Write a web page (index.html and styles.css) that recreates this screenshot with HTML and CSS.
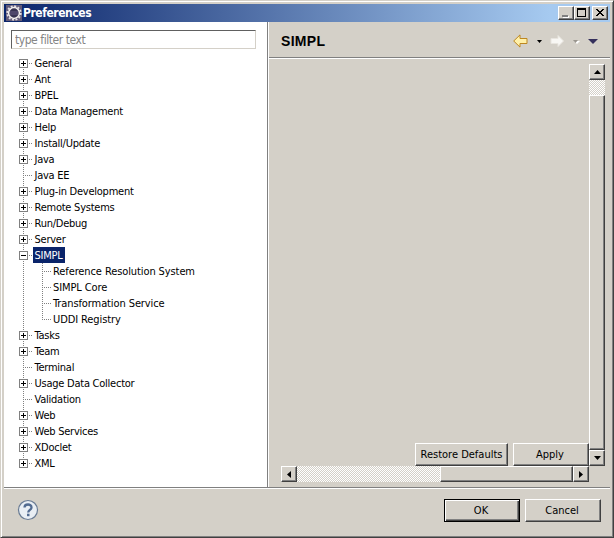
FILE: index.html
```html
<!DOCTYPE html>
<html lang="en">
<head>
<meta charset="utf-8">
<title>Preferences</title>
<link rel="stylesheet" href="styles.css">
</head>
<body>
<div class="window">
  <header class="titlebar">
    <svg class="app-icon" width="16" height="16" viewBox="0 0 16 16"><rect width="16" height="16" fill="#625a78"/><circle cx="8" cy="8" r="6.8" fill="none" stroke="#e4e0e4" stroke-width="1.8" stroke-dasharray="2 1.56"/><circle cx="8" cy="8" r="5.4" fill="#383352" stroke="#f4f0ee" stroke-width="1.5"/><path d="M4 7h8M4 9h8" stroke="#665d83"/></svg>
    <h1>Preferences</h1>
    <div class="caption-buttons">
      <button class="cap"><svg width="12" height="11"><path d="M3 8h6v2H3z" fill="#fff"/><path d="M2 7h6v2H2z" fill="#808080"/></svg></button>
      <button class="cap max"><svg width="12" height="11"><path d="M1 0h9v9H1zM2 2v6h7V2z" fill-rule="evenodd"/></svg></button>
      <button class="cap"><svg width="12" height="11" shape-rendering="crispEdges"><path d="M2 1h2v1h1v1h2V2h1V1h2v1H9v1H8v1H7v1h1v1h1v1h1v1H8V7H7V6H5v1H4v1H2V7h1V6h1V5h1V4H4V3H3V2H2z"/></svg></button>
    </div>
  </header>
  <main class="body">
    <aside class="sidebar">
      <input class="filter" placeholder="type filter text" aria-label="Filter">
      <ul class="tree">
        <li class="plus first"><span>General</span></li>
        <li class="plus"><span>Ant</span></li>
        <li class="plus"><span>BPEL</span></li>
        <li class="plus"><span>Data Management</span></li>
        <li class="plus"><span>Help</span></li>
        <li class="plus"><span>Install/Update</span></li>
        <li class="plus"><span>Java</span></li>
        <li class="leaf"><span>Java EE</span></li>
        <li class="plus"><span>Plug-in Development</span></li>
        <li class="plus"><span>Remote Systems</span></li>
        <li class="plus"><span>Run/Debug</span></li>
        <li class="plus"><span>Server</span></li>
        <li class="minus"><span class="selected">SIMPL</span></li>
        <li class="child"><span>Reference Resolution System</span></li>
        <li class="child"><span>SIMPL Core</span></li>
        <li class="child"><span>Transformation Service</span></li>
        <li class="child end"><span>UDDI Registry</span></li>
        <li class="plus"><span>Tasks</span></li>
        <li class="plus"><span>Team</span></li>
        <li class="leaf"><span>Terminal</span></li>
        <li class="plus"><span>Usage Data Collector</span></li>
        <li class="leaf"><span>Validation</span></li>
        <li class="plus"><span>Web</span></li>
        <li class="plus"><span>Web Services</span></li>
        <li class="plus"><span>XDoclet</span></li>
        <li class="plus last"><span>XML</span></li>
      </ul>
    </aside>
    <section class="page">
      <div class="page-head">
        <h2>SIMPL</h2>
        <svg class="nav" width="88" height="14" viewBox="0 0 88 14">
          <path d="M.7 7L7 .9v3.600h7v5H7v3.600z" fill="#fff0a8" stroke="#bd8720" stroke-linejoin="round"/>
          <path d="M24 6h5l-2.500 3z"/>
          <path d="M50.500 7l-5.500-5.500v3h-7v5h7v3z" fill="#f8f7f4" stroke="#e8e5df"/>
          <path d="M61 7h6l-3 3z" fill="#fff"/><path d="M60 6h5l-2.500 3z" fill="#99958e"/>
          <path d="M75 5h10l-5 5z" fill="#35305c"/>
        </svg>
      </div>
      <div class="scroller">
        <div class="view">
          <div class="page-actions"><button class="btn restore">Restore Defaults</button><button class="btn apply">Apply</button></div>
        </div>
        <div class="vbar">
          <button class="arrow"><svg width="7" height="4"><path d="M0 4h7L3.500 0z"/></svg></button>
          <div class="track"></div><div class="thumb"></div>
          <button class="arrow"><svg width="7" height="4"><path d="M0 0h7L3.500 4z"/></svg></button>
        </div>
        <div class="hbar">
          <button class="arrow"><svg width="4" height="7"><path d="M4 0v7L0 3.500z"/></svg></button>
          <div class="track"></div><div class="thumb"></div>
          <button class="arrow"><svg width="4" height="7"><path d="M0 0v7L4 3.500z"/></svg></button>
        </div>
      </div>
    </section>
  </main>
  <footer class="footer">
    <svg class="help" width="22" height="22" viewBox="0 0 22 22"><circle cx="11" cy="11" r="9.500" fill="#e9eef4" stroke="#697b94" stroke-width="1.200"/><path d="M7.500 8.600C7.500 4.500 14.500 4.500 14.500 8.400c0 2.400-3.300 2.500-3.300 5" fill="none" stroke="#526b91" stroke-width="2.300"/><rect x="10" y="14.700" width="2.500" height="2.500" fill="#526b91"/></svg>
    <button class="btn ok">OK</button><button class="btn cancel">Cancel</button>
  </footer>
</div>
</body>
</html>
```
FILE: styles.css
```css
*, ::before { box-sizing: border-box; }
body { margin: 0; font: 11px/16px "DejaVu Sans Condensed", "DejaVu Sans", sans-serif; color: #000; }
button { font: inherit; color: inherit; border-radius: 0; padding: 0; background: #d4d0c8; }
svg { display: block; }
.window {
  width: 614px; height: 538px; padding: 3px;
  background: #d4d0c8; border: 1px solid #404040; border-top-color: #d4d0c8; border-left-color: #d4d0c8;
  box-shadow: inset 1px 1px #fff, inset -1px -1px #808080;
  display: flex; flex-direction: column;
}
.titlebar { height: 18px; flex: none; display: flex; align-items: center; padding: 0 2px; background: linear-gradient(90deg, #0a246a, #a6caf0 90%); }
.titlebar h1 { margin: 0 auto 0 1px; font-size: 12px; line-height: 18px; font-weight: bold; color: #fff; letter-spacing: -.45px; }
.caption-buttons { display: flex; }
.cap { width: 16px; height: 14px; border: 1px solid; border-color: #fff #404040 #404040 #fff; box-shadow: inset -1px -1px #808080; padding: 1px; }
.max { margin-right: 2px; }
.body { height: 466px; flex: none; display: grid; grid-template-columns: 265px 1fr; border-bottom: 1px solid #808080; }
.sidebar { background: #fff; border-right: 1px solid #fff; box-shadow: inset -1px 0 #808080; padding: 8px 0 0 7px; }
.filter { display: block; width: 245px; height: 19px; padding: 1px 3px 0; border: 1px solid #d4d0c8; border-top-color: #606060; border-left-color: #606060; font: inherit; font-size: 12px; letter-spacing: -.45px; background: #fff; border-radius: 0; outline: 0; }
.filter::placeholder { color: #858585; opacity: 1; }
.tree { list-style: none; margin: 6px 0 0 8px; padding: 0; }
.tree li {
  height: 16px; padding-left: 13px; display: flex; letter-spacing: -.24px;
  background: repeating-linear-gradient(#808080 0 1px, transparent 1px 2px) 4px 0 / 1px 16px no-repeat,
    repeating-linear-gradient(90deg, #808080 0 1px, transparent 1px 2px) 4px 8px / 9px 1px no-repeat;
}
.tree li::before { content: ""; width: 9px; height: 9px; margin: 4px 5px 0 -13px; border: 1px solid #808080; flex: none; background: linear-gradient(#000, #000) center / 5px 1px no-repeat, linear-gradient(#000, #000) center / 1px 5px no-repeat, #fff; }
.tree .minus::before { background: linear-gradient(#000, #000) center / 5px 1px no-repeat, #fff; }
.tree .leaf::before { visibility: hidden; }
.tree .first { background-position: 4px 8px, 4px 8px; }
.tree .last { background-size: 1px 8px, 9px 1px; }
.tree span { padding: 1px 1.5px 0; line-height: 15px; white-space: nowrap; }
.tree .selected { background: #0a246a; color: #fff; padding-right: 2px; }
.tree .child { padding-left: 32.5px; letter-spacing: -.1px;
  background: repeating-linear-gradient(#808080 0 1px, transparent 1px 2px) 4px 0 / 1px 16px no-repeat,
    repeating-linear-gradient(#808080 0 1px, transparent 1px 2px) 23px 0 / 1px 16px no-repeat,
    repeating-linear-gradient(90deg, #808080 0 1px, transparent 1px 2px) 23px 8px / 9px 1px no-repeat; }
.tree .child::before { display: none; }
.tree .end { background-size: 1px 16px, 1px 8px, 9px 1px; }
.page { display: flex; flex-direction: column; }
.page-head { height: 36px; flex: none; display: flex; align-items: center; justify-content: space-between; padding: 2px 9px 0 12px; border-bottom: 1px solid #808080; box-shadow: 0 1px #fff; }
.page-head h2 { margin: 0; font: bold 14px/18px "Liberation Sans", sans-serif; letter-spacing: .3px; }
.scroller { margin: 6px 5px 0 12px; height: 418px; display: grid; grid-template: 402px 16px / 308px 16px; }
.view { display: flex; align-items: flex-end; justify-content: flex-end; }
.page-actions { display: flex; gap: 5px; }
.btn, .arrow, .thumb { border: 1px solid; border-color: #fff #404040 #404040 #fff; box-shadow: inset -1px -1px #808080; background: #d4d0c8; }
.btn { height: 23px; text-align: center; }
.restore { width: 93px; }
.apply { width: 76px; padding-right: 2px; }
.arrow { width: 16px; height: 16px; display: grid; place-items: center; flex: none; }
.vbar, .hbar { display: flex; }
.vbar { flex-direction: column; }
.track { background: repeating-conic-gradient(#fff 0 25%, #d4d0c8 0 50%) 0 0 / 2px 2px; }
.vbar .track { height: 15px; }
.vbar .thumb { flex: 1; }
.hbar .track { width: 143px; }
.hbar .thumb { flex: 1; }
.footer { flex: 1; border-top: 1px solid #fff; display: flex; align-items: center; gap: 5px; padding: 0 9px 2px 13px; }
.help { margin: 0 auto 2px 0; }
.ok, .cancel { width: 76px; padding: 1px 2px 0 0; }
.ok { border-color: #000; box-shadow: inset 1px 1px #fff, inset -1px -1px #404040, inset -2px -2px #808080; }
```
